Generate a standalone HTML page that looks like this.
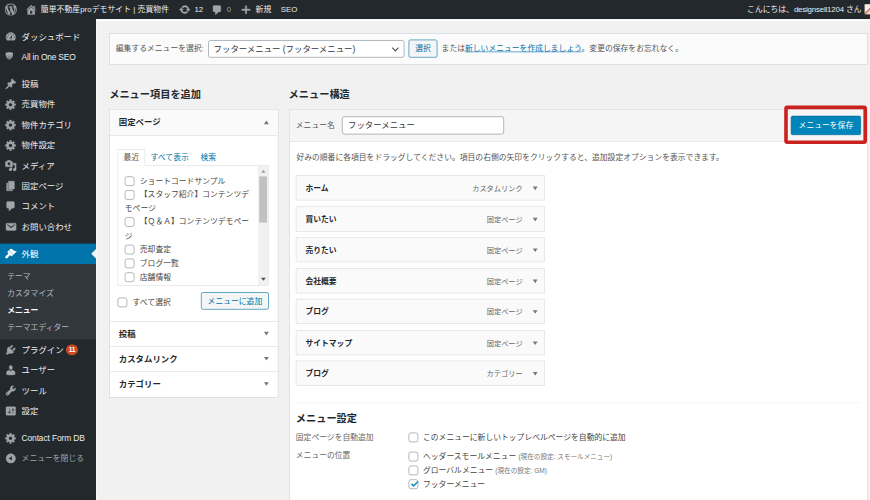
<!DOCTYPE html>
<html lang="ja">
<head>
<meta charset="utf-8">
<title>メニュー</title>
<style>
html,body{margin:0;padding:0;}
body{width:870px;height:500px;overflow:hidden;background:#f1f1f1;position:relative;}
#stage{position:absolute;left:0;top:0;width:1450px;height:834px;transform:scale(.6);transform-origin:0 0;background:#f1f1f1;overflow:hidden;
 font-family:"Liberation Sans","Noto Sans CJK JP",sans-serif;font-size:13px;line-height:1.4;color:#444;}
#stage *{box-sizing:border-box;}
svg{display:block;}
/* admin bar */
#bar{position:absolute;left:0;top:0;width:1450px;height:32px;background:#23282d;color:#eee;font-size:13px;line-height:32px;white-space:nowrap;}
#bar .it{position:absolute;top:0;height:32px;}
#bar svg{position:absolute;fill:#a0a5aa;stroke:#a0a5aa;stroke-width:.5;stroke-linejoin:round;}
/* sidebar */
#side{position:absolute;left:0;top:0;width:160px;height:834px;background:#23282d;}
#menu{position:absolute;left:0;top:44px;width:160px;margin:0;padding:0;list-style:none;}
#menu li.m{height:34px;position:relative;color:#eee;font-size:14px;line-height:34px;padding-left:36px;white-space:nowrap;}
#menu li.m svg{position:absolute;left:8px;top:7px;width:20px;height:20px;fill:#a0a5aa;stroke:#a0a5aa;stroke-width:.6;stroke-linejoin:round;}
#menu li.sep{height:5px;margin:0 0 6px;}
#menu li.cur{background:#0073aa;color:#fff;}
#menu li.cur svg{fill:#fff;stroke:#fff;}
#menu li.cur:after{content:"";position:absolute;right:0;top:9px;border:8px solid transparent;border-right-color:#f1f1f1;}
#menu ul.sub{list-style:none;margin:0;padding:7px 0 6px;background:#32373c;}
#menu ul.sub li{padding:5px 12px;font-size:13px;line-height:18.2px;color:#b4b9be;white-space:nowrap;}
#menu ul.sub li.on{color:#fff;font-weight:bold;}
.badge{display:inline-block;background:#ca4a1f;color:#fff;font-size:11px;line-height:18px;font-weight:bold;height:18px;min-width:18px;border-radius:9px;text-align:center;padding:0 4.500px;margin-left:4px;vertical-align:1px;letter-spacing:-.3px;}
/* content */
.box{position:absolute;background:#fff;border:1px solid #ddd;}
.abs{position:absolute;white-space:nowrap;}
h2.hd{position:absolute;margin:0;font-size:17px;line-height:24px;font-weight:bold;color:#23282d;white-space:nowrap;}
.cb{position:absolute;width:16px;height:16px;border:1.300px solid #7e8993;border-radius:4px;background:#fff;}
.tri{position:absolute;width:0;height:0;border-left:4px solid transparent;border-right:4px solid transparent;}
.tri.d{border-top:6px solid #72777c;}
.tri.u{border-bottom:6px solid #72777c;}
.mi{position:absolute;left:10px;width:415px;height:42px;background:#fafafa;border:1px solid #ddd;}
.mi b{position:absolute;left:15px;top:1px;line-height:40px;font-size:13px;color:#23282d;font-weight:bold;white-space:nowrap;}
.mi span{position:absolute;right:36px;top:1px;line-height:40px;font-size:12px;color:#666;white-space:nowrap;}
.mi i{position:absolute;right:11.500px;top:18px;width:0;height:0;border-left:4px solid transparent;border-right:4px solid transparent;border-top:6px solid #72777c;}
</style>
</head>
<body>
<div id="stage">

<!-- ============ SIDEBAR ============ -->
<div id="side">
<ul id="menu">
<li class="m"><svg viewBox="0 0 20 20"><path d="M3.76 16h12.48c1.1-1.37 1.76-3.11 1.76-5 0-4.42-3.58-8-8-8s-8 3.58-8 8c0 1.89.66 3.63 1.76 5zM10 4c.55 0 1 .45 1 1s-.45 1-1 1-1-.45-1-1 .45-1 1-1zM6 6c.55 0 1 .45 1 1s-.45 1-1 1-1-.45-1-1 .45-1 1-1zm8 0c.55 0 1 .45 1 1s-.45 1-1 1-1-.45-1-1 .45-1 1-1zm-5.37 5.55L12 7v6c0 1.1-.9 2-2 2s-2-.9-2-2c0-.57.24-1.08.63-1.45zM4 10c.55 0 1 .45 1 1s-.45 1-1 1-1-.45-1-1 .45-1 1-1zm12 0c.55 0 1 .45 1 1s-.45 1-1 1-1-.45-1-1 .45-1 1-1zm-5 3c0-.55-.45-1-1-1s-1 .45-1 1 .45 1 1 1 1-.45 1-1z"/></svg>ダッシュボード</li>
<li class="m" style="letter-spacing:-.3px"><svg viewBox="0 0 20 20"><defs><linearGradient id="sh" x1="0" y1="0" x2="0" y2="1"><stop offset="0" stop-color="#b4b9be"/><stop offset="1" stop-color="#6c7176"/></linearGradient></defs><path d="M1.500 3Q7.500 1.200 13.500 3L13.500 7C13.500 11 10 13.500 7.500 14.500C5 13.500 1.500 11 1.500 7Z" fill="url(#sh)" stroke="none"/></svg>All in One SEO</li>
<li class="sep"></li>
<li class="m"><svg viewBox="0 0 20 20"><path d="M10.440 3.020l1.820-1.820 6.360 6.350-1.830 1.820c-1.050-.68-2.480-.57-3.410.36l-.75.75c-.92.930-1.040 2.350-.35 3.410l-1.830 1.820-2.410-2.410-2.800 2.790c-.42.420-3.380 2.710-3.800 2.290s1.860-3.390 2.280-3.810l2.790-2.790L4.100 9.360l1.830-1.820c1.050.69 2.480.57 3.400-.36l.75-.75c.930-.92 1.050-2.350.36-3.410z"/></svg>投稿</li>
<li class="m"><svg viewBox="0 0 20 20"><path d="M18 12h-2.180c-.17.7-.44 1.350-.81 1.930l1.540 1.540-2.100 2.100-1.540-1.540c-.58.360-1.230.630-1.910.790V19H8v-2.180c-.68-.16-1.330-.43-1.910-.79l-1.540 1.540-2.120-2.120 1.540-1.540c-.36-.58-.63-1.230-.79-1.910H1V9.030h2.170c.16-.7.44-1.350.8-1.940L2.430 5.550l2.100-2.100 1.540 1.540c.58-.37 1.240-.64 1.930-.81V2h3v2.180c.68.160 1.330.430 1.910.790l1.540-1.540 2.120 2.120-1.540 1.540c.36.590.64 1.240.8 1.940H18V12zm-8.500 1.500c1.660 0 3-1.340 3-3s-1.340-3-3-3-3 1.340-3 3 1.340 3 3 3z"/></svg>売買物件</li>
<li class="m"><svg viewBox="0 0 20 20"><path d="M18 12h-2.180c-.17.7-.44 1.350-.81 1.930l1.540 1.540-2.100 2.100-1.540-1.540c-.58.360-1.230.630-1.910.790V19H8v-2.180c-.68-.16-1.330-.43-1.910-.79l-1.540 1.540-2.120-2.120 1.540-1.540c-.36-.58-.63-1.230-.79-1.910H1V9.030h2.170c.16-.7.44-1.350.8-1.940L2.430 5.550l2.100-2.100 1.540 1.540c.58-.37 1.240-.64 1.930-.81V2h3v2.180c.68.160 1.330.430 1.910.790l1.540-1.540 2.120 2.120-1.540 1.540c.36.590.64 1.240.8 1.940H18V12zm-8.500 1.500c1.660 0 3-1.340 3-3s-1.340-3-3-3-3 1.340-3 3 1.340 3 3 3z"/></svg>物件カテゴリ</li>
<li class="m"><svg viewBox="0 0 20 20"><path d="M18 12h-2.180c-.17.7-.44 1.350-.81 1.930l1.540 1.540-2.100 2.100-1.540-1.540c-.58.360-1.230.630-1.910.790V19H8v-2.180c-.68-.16-1.330-.43-1.910-.79l-1.540 1.540-2.120-2.120 1.540-1.540c-.36-.58-.63-1.230-.79-1.910H1V9.030h2.170c.16-.7.44-1.350.8-1.940L2.430 5.550l2.100-2.100 1.540 1.540c.58-.37 1.240-.64 1.930-.81V2h3v2.180c.68.160 1.330.430 1.910.790l1.540-1.540 2.120 2.120-1.540 1.540c.36.590.64 1.240.8 1.940H18V12zm-8.500 1.500c1.660 0 3-1.340 3-3s-1.340-3-3-3-3 1.340-3 3 1.340 3 3 3z"/></svg>物件設定</li>
<li class="m"><svg viewBox="0 0 20 20"><path d="M13 11V4c0-.55-.45-1-1-1h-1.670L9 1H5L3.670 3H2c-.55 0-1 .45-1 1v7c0 .55.45 1 1 1h10c.55 0 1-.45 1-1zM7 4.500c1.380 0 2.500 1.120 2.500 2.500S8.380 9.500 7 9.500 4.500 8.380 4.500 7 5.620 4.500 7 4.500zM14 6h5v10.500c0 1.380-1.120 2.500-2.500 2.500S14 17.880 14 16.500s1.120-2.500 2.500-2.500c.17 0 .34.020.5.050V9h-3V6zm-4 8.050V13h2v3.500c0 1.380-1.120 2.500-2.500 2.500S7 17.880 7 16.500 8.120 14 9.500 14c.17 0 .34.020.5.050z"/></svg>メディア</li>
<li class="m"><svg viewBox="0 0 20 20"><path d="M6 15V2h10v13H6zm-1 1h8v2H3V5h2v11z"/></svg>固定ページ</li>
<li class="m"><svg viewBox="0 0 20 20"><path d="M5 2h9c1.100 0 2 .9 2 2v7c0 1.100-.9 2-2 2h-2l-5 5v-5H5c-1.100 0-2-.9-2-2V4c0-1.100.9-2 2-2z"/></svg>コメント</li>
<li class="m"><svg viewBox="0 0 20 20"><path d="M3.870 4h13.250C18.370 4 19 4.590 19 5.790v8.420c0 1.190-.63 1.790-1.880 1.790H3.870c-1.250 0-1.880-.6-1.880-1.790V5.790c0-1.200.63-1.790 1.880-1.790zm6.620 8.600l6.740-5.530c.24-.2.430-.66.130-1.070-.29-.41-.82-.42-1.170-.17l-5.700 3.860L4.800 5.830c-.35-.25-.88-.24-1.170.17-.3.410-.11.870.13 1.070z"/></svg>お問い合わせ</li>
<li class="sep"></li>
<li class="m cur"><svg viewBox="0 0 20 20"><path d="M14.480 11.060L7.410 3.990l1.500-1.500c.5-.56 2.300-.47 3.510.32 1.210.8 1.430 1.280 2.910 2.100 1.180.64 2.450 1.260 4.450.85zm-.71.710L6.700 4.700 4.930 6.470c-.39.390-.39 1.020 0 1.410l1.060 1.060c.39.390.39 1.030 0 1.420-.6.6-1.430 1.110-2.210 1.690-.35.260-.7.530-1.010.84C1.430 14.230.4 16.080 1.400 17.070c.99 1 2.840-.03 4.180-1.360.31-.31.58-.66.850-1.020.57-.78 1.080-1.610 1.690-2.210.39-.39 1.020-.39 1.410 0l1.060 1.060c.39.390 1.020.39 1.410 0z"/></svg>外観</li>
<ul class="sub">
<li>テーマ</li>
<li>カスタマイズ</li>
<li class="on">メニュー</li>
<li>テーマエディター</li>
</ul>
<li class="m"><svg viewBox="0 0 20 20"><path d="M13.110 4.360L9.870 7.600 8 5.730l3.240-3.240c.35-.34 1.050-.2 1.560.32.520.51.660 1.210.31 1.550zm-8 1.770l.91-1.120 9.010 9.010-1.190.84c-.71.710-2.630 1.160-3.820 1.160H6.140L4.900 17.260c-.59.59-1.540.59-2.120 0-.59-.58-.59-1.530 0-2.120l1.240-1.240v-3.880c0-1.130.4-3.190 1.090-3.890zm7.260 3.970l3.240-3.240c.34-.35 1.040-.21 1.550.31.520.51.660 1.210.31 1.550l-3.240 3.250z"/></svg>プラグイン<span class="badge">11</span></li>
<li class="m"><svg viewBox="0 0 20 20"><path d="M10 9.250c-2.270 0-2.730-3.440-2.730-3.440C7 4.020 7.820 2 9.970 2c2.160 0 2.980 2.020 2.710 3.810 0 0-.41 3.440-2.680 3.440zm0 2.570L12.720 10c2.390 0 4.520 2.330 4.520 4.530v2.490s-3.650 1.130-7.240 1.130c-3.650 0-7.240-1.130-7.240-1.130v-2.490c0-2.250 1.940-4.480 4.470-4.480z"/></svg>ユーザー</li>
<li class="m"><svg viewBox="0 0 20 20"><path d="M16.680 9.770c-1.340 1.340-3.300 1.670-4.950.99l-5.410 6.520c-.99.990-2.590.990-3.580 0s-.99-2.590 0-3.570l6.520-5.420c-.68-1.650-.35-3.610.99-4.950 1.280-1.280 3.120-1.620 4.720-1.060l-2.890 2.890 2.820 2.820 2.860-2.870c.53 1.580.18 3.390-1.080 4.650zM3.810 16.210c.4.390 1.040.39 1.430 0 .4-.4.4-1.040 0-1.430-.39-.4-1.030-.4-1.430 0-.39.390-.39 1.030 0 1.430z"/></svg>ツール</li>
<li class="m"><svg viewBox="0 0 20 20"><path d="M18 16V4c0-.55-.45-1-1-1H3c-.55 0-1 .45-1 1v12c0 .55.45 1 1 1h14c.55 0 1-.45 1-1zM8 11h1c.55 0 1 .45 1 1s-.45 1-1 1H8v1.500c0 .28-.22.5-.5.5s-.5-.22-.5-.5V13H6c-.55 0-1-.45-1-1s.45-1 1-1h1V5.500c0-.28.22-.5.5-.5s.5.220.5.5V11zm5-2h-1c-.55 0-1-.45-1-1s.45-1 1-1h1V5.500c0-.28.22-.5.5-.5s.5.220.5.5V7h1c.55 0 1 .45 1 1s-.45 1-1 1h-1v5.500c0 .28-.22.5-.5.5s-.5-.22-.5-.5V9z"/></svg>設定</li>
<li class="sep"></li>
<li class="m"><svg viewBox="0 0 20 20"><path d="M18 12h-2.180c-.17.7-.44 1.350-.81 1.930l1.540 1.540-2.100 2.100-1.540-1.540c-.58.360-1.230.630-1.910.790V19H8v-2.180c-.68-.16-1.330-.43-1.910-.79l-1.540 1.540-2.120-2.120 1.540-1.540c-.36-.58-.63-1.230-.79-1.910H1V9.030h2.170c.16-.7.44-1.350.8-1.940L2.430 5.550l2.100-2.100 1.540 1.540c.58-.37 1.240-.64 1.930-.81V2h3v2.180c.68.160 1.330.430 1.910.790l1.540-1.540 2.120 2.120-1.540 1.540c.36.590.64 1.240.8 1.940H18V12zm-8.500 1.500c1.660 0 3-1.340 3-3s-1.340-3-3-3-3 1.340-3 3 1.340 3 3 3z"/></svg><span style="letter-spacing:-.2px">Contact Form DB</span></li>
<li class="m" style="color:#a0a5aa;font-size:13px"><svg viewBox="0 0 20 20"><path d="M10 2.160c4.330 0 7.840 3.510 7.840 7.840s-3.510 7.840-7.840 7.840S2.160 14.330 2.160 10 5.670 2.160 10 2.160zm2 11.720V6.120L6.180 9.970z"/></svg>メニューを閉じる</li>
</ul>
</div>

<!-- ============ ADMIN BAR ============ -->
<div id="bar">
<svg style="left:8px;top:6px;width:20px;height:20px" viewBox="0 0 20 20"><path d="M20 10c0-5.510-4.490-10-10-10C4.480 0 0 4.490 0 10c0 5.520 4.480 10 10 10 5.510 0 10-4.480 10-10zM7.780 15.370L4.370 6.220c.55-.02 1.170-.08 1.170-.08.5-.06.44-1.130-.06-1.110 0 0-1.450.11-2.370.11-.18 0-.37 0-.58-.01C4.120 2.690 6.870 1.110 10 1.110c2.330 0 4.450.87 6.050 2.340-.68-.11-1.650.39-1.650 1.580 0 .74.45 1.360.9 2.100.35.610.55 1.360.55 2.460 0 1.490-1.400 5-1.400 5l-3.030-8.370c.54-.02.82-.17.82-.17.5-.05.44-1.250-.06-1.220 0 0-1.440.12-2.380.12-.87 0-2.330-.12-2.330-.12-.5-.03-.56 1.200-.06 1.220l.92.080 1.260 3.410zM17.410 10c.24-.64.74-1.870.43-4.250.7 1.290 1.050 2.710 1.050 4.250 0 3.290-1.730 6.240-4.400 7.780.97-2.590 1.940-5.200 2.920-7.780zM6.100 18.090C3.120 16.650 1.110 13.530 1.110 10c0-1.300.23-2.480.72-3.590C3.250 10.300 4.670 14.200 6.100 18.090zm4.030-6.630l2.580 6.980c-.86.290-1.760.45-2.710.45-.79 0-1.570-.11-2.290-.33.81-2.380 1.620-4.740 2.420-7.100z"/></svg>
<svg style="left:42px;top:6px;width:20px;height:20px" viewBox="0 0 20 20"><path d="M16 8.500l1.530 1.530-1.060 1.060L10 4.620l-6.470 6.470-1.060-1.060L10 2.500l4 4v-2h2v4zm-6-2.460l6 5.990V18H4v-5.970zM12 17v-5H8v5h4z"/></svg>
<div class="it" style="left:68px;letter-spacing:.12px">簡単不動産proデモサイト | 売買物件</div>
<svg style="left:298px;top:6px;width:20px;height:20px" viewBox="0 0 20 20"><path d="M10.200 3.280c3.530 0 6.430 2.610 6.920 6h2.080l-3.500 4-3.500-4h2.320c-.45-1.970-2.210-3.450-4.320-3.450-1.450 0-2.730.71-3.540 1.780L4.950 5.660C6.230 4.200 8.110 3.280 10.200 3.280zm-.4 13.440c-3.520 0-6.430-2.610-6.920-6H.8l3.500-4c1.170 1.330 2.330 2.670 3.500 4H5.480c.45 1.970 2.210 3.450 4.320 3.450 1.450 0 2.730-.71 3.540-1.780l1.710 1.950c-1.280 1.460-3.150 2.380-5.250 2.380z"/></svg>
<div class="it" style="left:324px">12</div>
<svg style="left:352px;top:7px;width:20px;height:20px" viewBox="0 0 20 20"><path d="M5 2h9c1.100 0 2 .9 2 2v7c0 1.100-.9 2-2 2h-2l-5 5v-5H5c-1.100 0-2-.9-2-2V4c0-1.100.9-2 2-2z"/></svg>
<div class="it" style="left:378px;color:#a0a5aa">0</div>
<svg style="left:400px;top:6px;width:20px;height:20px" viewBox="0 0 20 20"><path d="M17 9v2.500h-5.750V17h-2.500v-5.500H3V9h5.750V3.500h2.500V9z"/></svg>
<div class="it" style="left:426px">新規</div>
<div class="it" style="left:468px">SEO</div>
<div class="it" style="right:14px">こんにちは、<span style="letter-spacing:-.25px">designsell1204</span> さん</div>
<div style="position:absolute;left:1441px;top:7px;width:10px;height:17px;background:linear-gradient(135deg,#f6f0e2 55%,#d86a6a 56%,#f1e4cf 80%)"></div>
</div>

<!-- ============ CONTENT ============ -->
<div style="position:absolute;left:160px;top:32px;width:1290px;height:4px;background:linear-gradient(#fff 0,#fff 50%,#f1f1f1 100%)"></div>
<div style="position:absolute;left:160px;top:32px;width:2px;height:802px;background:#f8f8f8"></div>
<!-- manage menus -->
<div class="box" style="left:182px;top:55px;width:1264px;height:53px;background:#fbfbfb;border-color:#ccd0d4">
 <div class="abs" style="left:10px;top:0;line-height:50px;color:#555">編集するメニューを選択:</div>
 <div class="abs" style="left:164px;top:11px;width:327px;height:29px;border:1px solid #7e8993;border-radius:4px;background:#fff;line-height:27px;padding-left:8px;font-size:14px;color:#32373c">フッターメニュー (フッターメニュー)
  <svg style="position:absolute;right:5px;top:5px;width:18px;height:18px" viewBox="0 0 20 20"><path d="M5 6.500l5 5 5-5 1.500 1.500-6.500 6.500-6.500-6.500z" fill="#555"/></svg></div>
 <div class="abs" style="left:498px;top:10px;width:48px;height:30px;border:1.300px solid #0071a1;border-radius:3px;background:#f3f5f6;color:#0071a1;line-height:28px;text-align:center">選択</div>
 <div class="abs" style="left:553px;top:0;line-height:50px;color:#555">または<span style="color:#0073aa;text-decoration:underline">新しいメニューを作成しましょう</span>。変更の保存をお忘れなく。</div>
</div>

<h2 class="hd" style="left:182px;top:146px">メニュー項目を追加</h2>
<h2 class="hd" style="left:481px;top:146px">メニュー構造</h2>

<!-- left accordion -->
<div class="box" style="left:182px;top:182px;width:282px;height:481px;border-color:#ccd0d4">
 <div class="abs" style="left:0;top:0;width:280px;height:43px;background:#fafafa;border-bottom:1px solid #ddd"></div>
 <div class="abs" style="left:15px;top:0;line-height:43px;font-size:14px;font-weight:bold;color:#23282d">固定ページ</div>
 <div class="tri u" style="left:256.500px;top:18px"></div>

 <div class="abs" style="left:13px;top:66px;width:46px;height:27px;border:1px solid #ddd;border-bottom-color:#fff;background:#fff;z-index:2;text-align:center;line-height:25px;font-size:13px;color:#555">最近</div>
 <div class="abs" style="left:68px;top:66px;line-height:27px;font-size:13px;color:#0073aa">すべて表示</div>
 <div class="abs" style="left:151px;top:66px;line-height:27px;font-size:13px;color:#0073aa">検索</div>

 <div class="abs" style="left:13px;top:92px;width:252px;height:201px;border:1px solid #ddd;background:#fff;overflow:hidden">
  <div class="abs" style="right:0;top:0;width:17px;height:199px;background:#f1f1f1"></div>
  <div class="abs" style="right:2px;top:18px;width:13px;height:77px;background:#c1c1c1"></div>
  <div class="tri u" style="right:4px;top:7px;border-width:0 4px 5px 4px;border-bottom-color:#a3a3a3"></div>
  <div class="tri d" style="right:4px;top:187px;border-width:5px 4px 0 4px;border-top-color:#505050"></div>
  <div class="cb" style="left:11px;top:18px"></div><div class="abs" style="left:36px;top:16px;line-height:20px">ショートコードサンプル</div>
  <div class="cb" style="left:11px;top:41px"></div><div class="abs" style="left:36px;top:39px;line-height:20px">【スタッフ紹介】コンテンツデ</div>
  <div class="abs" style="left:11px;top:61px;line-height:20px">モページ</div>
  <div class="cb" style="left:11px;top:86px"></div><div class="abs" style="left:36px;top:84px;line-height:20px">【Ｑ＆Ａ】コンテンツデモペー</div>
  <div class="abs" style="left:11px;top:108px;line-height:20px">ジ</div>
  <div class="cb" style="left:11px;top:132px"></div><div class="abs" style="left:36px;top:130px;line-height:20px">売却査定</div>
  <div class="cb" style="left:11px;top:155px"></div><div class="abs" style="left:36px;top:153px;line-height:20px">ブログ一覧</div>
  <div class="cb" style="left:11px;top:178px"></div><div class="abs" style="left:36px;top:176px;line-height:20px">店舗情報</div>
 </div>

 <div class="cb" style="left:13px;top:313px"></div><div class="abs" style="left:38px;top:311px;line-height:20px">すべて選択</div>
 <div class="abs" style="left:152px;top:304px;width:113px;height:29px;border:1.300px solid #0071a1;border-radius:3px;background:#f3f5f6;color:#0071a1;line-height:27px;text-align:center">メニューに追加</div>

 <div class="abs" style="left:0;top:352px;width:280px;border-top:1px solid #ddd"></div>
 <div class="abs" style="left:15px;top:353px;line-height:41px;font-size:14px;font-weight:bold;color:#23282d">投稿</div><div class="tri d" style="left:256.500px;top:370px"></div>
 <div class="abs" style="left:0;top:394px;width:280px;border-top:1px solid #ddd"></div>
 <div class="abs" style="left:15px;top:395px;line-height:41px;font-size:14px;font-weight:bold;color:#23282d">カスタムリンク</div><div class="tri d" style="left:256.500px;top:412px"></div>
 <div class="abs" style="left:0;top:436px;width:280px;border-top:1px solid #ddd"></div>
 <div class="abs" style="left:15px;top:437px;line-height:41px;font-size:14px;font-weight:bold;color:#23282d">カテゴリー</div><div class="tri d" style="left:256.500px;top:454px"></div>
</div>

<!-- right: menu structure -->
<div class="box" style="left:482px;top:182px;width:964px;height:700px;border-color:#ccd0d4">
 <div class="abs" style="left:0;top:0;width:962px;height:53px;background:#f5f5f5;border-bottom:1px solid #ddd"></div>
 <div class="abs" style="left:10px;top:0;line-height:52px;color:#555">メニュー名</div>
 <div class="abs" style="left:87px;top:11px;width:270px;height:30px;border:1px solid #7e8993;border-radius:4px;background:#fff;line-height:28px;padding-left:9px;font-size:14px;color:#32373c">フッターメニュー</div>
 <div class="abs" style="left:835px;top:10px;width:117px;height:32px;border:1px solid #006799;border-radius:3px;background:#0085ba;color:#fff;line-height:30px;text-align:center;font-size:13px">メニューを保存</div>
 <div class="abs" style="left:824px;top:-7px;width:138px;height:64px;border:6px solid #c9211e;border-radius:5px"></div>

 <div class="abs" style="left:11px;top:69px;line-height:20px;color:#555">好みの順番に各項目をドラッグしてください。項目の右側の矢印をクリックすると、追加設定オプションを表示できます。</div>

 <div class="mi" style="top:109.0px"><b>ホーム</b><span>カスタムリンク</span><i></i></div>
 <div class="mi" style="top:160.5px"><b>買いたい</b><span>固定ページ</span><i></i></div>
 <div class="mi" style="top:212.0px"><b>売りたい</b><span>固定ページ</span><i></i></div>
 <div class="mi" style="top:263.5px"><b>会社概要</b><span>固定ページ</span><i></i></div>
 <div class="mi" style="top:315.0px"><b>ブログ</b><span>固定ページ</span><i></i></div>
 <div class="mi" style="top:366.5px"><b>サイトマップ</b><span>固定ページ</span><i></i></div>
 <div class="mi" style="top:418.0px"><b>ブログ</b><span>カテゴリー</span><i></i></div>

 <div class="abs" style="left:11px;top:488px;width:940px;border-top:1px solid #eee"></div>
 <div class="abs" style="left:10px;top:504px;line-height:24px;font-size:17px;font-weight:bold;color:#23282d">メニュー設定</div>
 <div class="abs" style="left:10px;top:536px;line-height:20px;font-size:13px;color:#666">固定ページを自動追加</div>
 <div class="cb" style="left:198px;top:538px"></div><div class="abs" style="left:222px;top:536px;line-height:20px">このメニューに新しいトップレベルページを自動的に追加</div>
 <div class="abs" style="left:10px;top:567px;line-height:20px;font-size:13px;color:#666">メニューの位置</div>
 <div class="cb" style="left:198px;top:570px"></div><div class="abs" style="left:222px;top:568px;line-height:20px">ヘッダースモールメニュー <span style="font-size:11px;color:#777">(現在の設定: スモールメニュー)</span></div>
 <div class="cb" style="left:198px;top:593px"></div><div class="abs" style="left:222px;top:591px;line-height:20px">グローバルメニュー <span style="font-size:11px;color:#777">(現在の設定: GM)</span></div>
 <div class="cb" style="left:198px;top:616px"><svg style="position:absolute;left:.500px;top:-1.500px;width:16px;height:16px;overflow:visible" viewBox="0 0 20 20"><path d="M2.500 10.500l2.300-2.300 3.200 3.200L16 3.200l2.300 2.300L8 16z" fill="#1e8cbe"/></svg></div><div class="abs" style="left:222px;top:614px;line-height:20px">フッターメニュー</div>
</div>

</div>
</body>
</html>
